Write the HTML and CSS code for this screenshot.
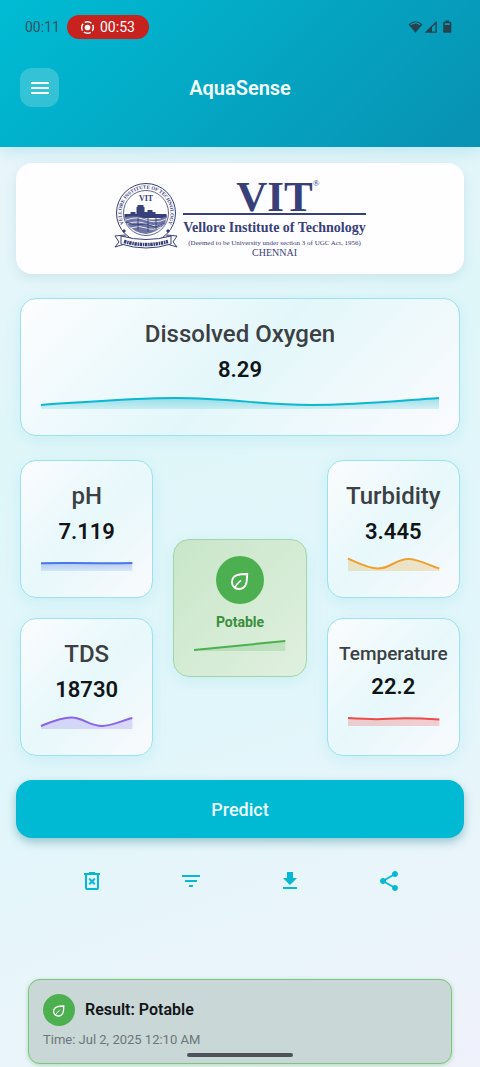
FILE: index.html
```html
<!DOCTYPE html>
<html lang="en">
<head>
<meta charset="utf-8">
<meta name="viewport" content="width=device-width, initial-scale=1">
<title>AquaSense</title>
<link rel="stylesheet" href="styles.css">
</head>
<body>
<svg class="defs" aria-hidden="true">
  <defs>
    <symbol id="leaf" viewBox="0 0 24 24"><path d="M19.200 6C12 6.100 4 6.300 4 14.200A6.700 6.700 0 0 0 10.800 21C18.800 21 19.100 13 19.200 6Z" fill="none" stroke="currentColor" stroke-width="1.900"/><path d="M6.500 20Q8.500 15.500 13 12.300" fill="none" stroke="currentColor" stroke-width="1.500"/></symbol>
    <linearGradient id="fade-cyan" x1="0" y1="0" x2="0" y2="1"><stop offset="0" stop-color="#00acc1" stop-opacity=".35"/><stop offset="1" stop-color="#00acc1" stop-opacity=".14"/></linearGradient>
    <linearGradient id="fade-blue" x1="0" y1="0" x2="0" y2="1"><stop offset="0" stop-color="#4a78e0" stop-opacity=".35"/><stop offset="1" stop-color="#4a78e0" stop-opacity=".14"/></linearGradient>
  </defs>
</svg>

<header class="header">
  <div class="status">
    <span class="clock">00:11</span>
    <span class="recording">
      <svg class="rec-icon" viewBox="0 0 16 16"><circle cx="8" cy="8" r="3" fill="#fff"/><circle cx="8" cy="8" r="6.2" fill="none" stroke="#fff" stroke-width="1.5" stroke-dasharray="7.7 2" stroke-dashoffset="3.8"/></svg>
      00:53
    </span>
    <svg class="system" viewBox="0 0 44 14">
      <path d="M.5 4.500Q7.500-2 14.500 4.500L7.500 12.800Z"/>
      <path d="M2.800 4.700Q7.500.9 12.200 4.700" fill="none" stroke="#079dbd" stroke-width="1.200"/>
      <path d="M16.500 12.800L28.800.8V12.800Z"/><path d="M24 7.200L27.400 4V11.500H24Z" fill="#079dbd"/>
      <path d="M37.500.5h3.500v1.200h1.500q.8 0 .8.800v9.500q0 .8-.8.800h-6.500q-.8 0-.8-.8V2.500q0-.8.8-.8h1.500z"/><path d="M36.700 3.200h5v1.800h-5z" fill="#079dbd"/>
    </svg>
  </div>
  <div class="toolbar">
    <button class="menu" aria-label="Menu"><svg class="icon" viewBox="0 0 24 24"><path d="M3 18h18v-2H3v2zm0-5h18v-2H3v2zm0-7v2h18V6H3z"/></svg></button>
    <h1 class="title">AquaSense</h1>
  </div>
</header>

<main class="page">
  <section class="brand">
    <svg class="seal" viewBox="0 0 64 70">
      <defs><path id="ring" d="M13.800 47.600A24.500 24.500 0 1 1 50.200 47.600"/></defs>
      <circle cx="32" cy="31" r="29.500" fill="none" stroke="#38407a"/>
      <circle cx="32" cy="31" r="22.500" fill="none" stroke="#38407a" stroke-width=".8"/>
      <text class="ring-text"><textPath href="#ring" startOffset="50%" text-anchor="middle">VELLORE INSTITUTE OF TECHNOLOGY</textPath></text>
      <text class="seal-text" x="32" y="19" text-anchor="middle">VIT</text>
      <path d="M10.500 32h6v-2h5v2h1v-7h1v-2h6v2h1v5h3v-2h5v2h3v2h11v4H10.500z" fill="#38407a"/>
      <path d="M11 35Q20 32 30 36T53 34L51 42Q42 51 32 52Q20 51 12 41Z" fill="#6f76a3"/>
      <path d="M12 38q10-4 20 0t20-1M13 42q10-4 20 0t18-1M17 46q8-3 15 0t15-1" fill="none" stroke="#fff" stroke-width=".8"/>
      <path d="M11 34h42M12 40l8 3 12-1 9 3 10-4M24 36v12M34 36v14M42 36v11" fill="none" stroke="#38407a" stroke-width=".9"/>
      <path d="M8 49l2-2 2 2-2 2zM52 49l2-2 2 2-2 2z" fill="#38407a"/>
      <path d="M1 54l10-1v9l-10 3 4-5zM63 54l-10-1v9l10 3-4-5z" fill="#fff" stroke="#38407a"/>
      <path d="M7 54q25 7 50 0v8q-25 8-50 0z" fill="#fff" stroke="#38407a"/>
      <path d="M10 59.500q22 6 44 0" fill="none" stroke="#38407a" stroke-width="3.500" stroke-dasharray="2.500 .7 1.500 .6"/>
    </svg>
    <div class="brand-text">
      <div class="brand-name">VIT<span class="registered">®</span></div>
      <div class="brand-full">Vellore Institute of Technology</div>
      <div class="brand-note">(Deemed to be University under section 3 of UGC Act, 1956)</div>
      <div class="brand-city">CHENNAI</div>
    </div>
  </section>

  <section class="readings">
    <article class="card">
      <h2 class="label">Dissolved Oxygen</h2>
      <p class="value">8.29</p>
      <svg class="chart" viewBox="0 0 398 24" preserveAspectRatio="none"><path d="M0 14C45 11 90 7 135 7C190 7 220 14 270 14C315 14 355 10 398 7V18H0Z" fill="url(#fade-cyan)"/><path class="line" d="M0 14C45 11 90 7 135 7C190 7 220 14 270 14C315 14 355 10 398 7" stroke="#0cb7d2"/></svg>
    </article>
    <div class="columns">
      <div class="column">
        <article class="card">
          <h2 class="label">pH</h2>
          <p class="value">7.119</p>
          <svg class="chart" viewBox="0 0 91 24" preserveAspectRatio="none"><path d="M0 10H91V18H0Z" fill="url(#fade-blue)"/><path class="line" d="M0 10.200Q15 9.800 30 10T60 10.300T91 10" stroke="#4a78e8"/></svg>
        </article>
        <article class="card">
          <h2 class="label">TDS</h2>
          <p class="value">18730</p>
          <svg class="chart" viewBox="0 0 91 24" preserveAspectRatio="none"><path d="M0 15C10 11 20 6.500 30 6.500C42 6.500 48 15 61 15C70 15 80 10 91 7V18H0Z" fill="#8b6cec" fill-opacity=".24"/><path class="line" d="M0 15C10 11 20 6.500 30 6.500C42 6.500 48 15 61 15C70 15 80 10 91 7" stroke="#8b63ec"/></svg>
        </article>
      </div>
      <article class="card card-potable">
        <span class="badge"><svg class="icon" viewBox="0 0 24 24"><use href="#leaf"/></svg></span>
        <p class="verdict">Potable</p>
        <svg class="chart" viewBox="0 0 91 24" preserveAspectRatio="none"><path d="M0 14L91 5V15H0Z" fill="#4caf50" fill-opacity=".2"/><path class="line" d="M0 14L91 5" stroke="#4caf50"/></svg>
      </article>
      <div class="column">
        <article class="card">
          <h2 class="label">Turbidity</h2>
          <p class="value">3.445</p>
          <svg class="chart" viewBox="0 0 91 24" preserveAspectRatio="none"><path d="M0 5.500C10 10 20 15.500 30 15.500C42 15.500 48 6 60 6C70 6 80 12 91 15.500V18H0Z" fill="#e8ab35" fill-opacity=".27"/><path class="line" d="M0 5.500C10 10 20 15.500 30 15.500C42 15.500 48 6 60 6C70 6 80 12 91 15.500" stroke="#f0a030"/></svg>
        </article>
        <article class="card">
          <h2 class="label label-small">Temperature</h2>
          <p class="value">22.2</p>
          <svg class="chart" viewBox="0 0 91 24" preserveAspectRatio="none"><path d="M0 10Q30 12 60 10L91 11V18H0Z" fill="#ef5350" fill-opacity=".26"/><path class="line" d="M0 10C15 11 30 11.500 40 10.800C55 9.800 65 9.800 91 11.500" stroke="#ee4b4b"/></svg>
        </article>
      </div>
    </div>
  </section>

  <button class="predict">Predict</button>

  <nav class="actions" aria-label="History actions">
    <button class="action" aria-label="Delete all"><svg class="icon" viewBox="0 0 24 24"><path d="M9 3h6v1h5v2h-1v13q0 2-2 2H7q-2 0-2-2V6H4V4h5zM7 6v13h10V6zM8.500 10.400L9.900 9 12 11.100 14.100 9l1.400 1.400-2.100 2.100 2.100 2.100-1.400 1.400-2.100-2.100L9.900 16l-1.400-1.400 2.100-2.100z" fill-rule="evenodd"/></svg></button>
    <button class="action" aria-label="Filter"><svg class="icon" viewBox="0 0 24 24"><path d="M10 18h4v-2h-4v2zM3 6v2h18V6H3zm3 7h12v-2H6v2z"/></svg></button>
    <button class="action" aria-label="Download"><svg class="icon" viewBox="0 0 24 24"><path d="M5 20h14v-2H5v2zM19 9h-4V3H9v6H5l7 7 7-7z"/></svg></button>
    <button class="action" aria-label="Share"><svg class="icon" viewBox="0 0 24 24"><path d="M18 16.080c-.76 0-1.440.3-1.960.77L8.910 12.700c.05-.23.090-.46.090-.7s-.04-.47-.09-.7l7.050-4.110c.54.5 1.250.81 2.040.81 1.660 0 3-1.340 3-3s-1.340-3-3-3-3 1.340-3 3c0 .24.040.47.090.7L8.040 9.810C7.500 9.310 6.790 9 6 9c-1.660 0-3 1.340-3 3s1.340 3 3 3c.79 0 1.500-.31 2.040-.81l7.120 4.160c-.05.21-.08.43-.08.650 0 1.610 1.310 2.920 2.920 2.920s2.920-1.310 2.920-2.920-1.310-2.920-2.920-2.920z"/></svg></button>
  </nav>

  <article class="result">
    <div class="result-head">
      <span class="badge badge-small"><svg class="icon icon-small" viewBox="0 0 24 24"><use href="#leaf"/></svg></span>
      <h2 class="result-title">Result: Potable</h2>
    </div>
    <p class="result-time">Time: Jul 2, 2025 12:10 AM</p>
  </article>
</main>
<div class="home-bar"></div>
</body>
</html>
```

FILE: styles.css
```css
* { box-sizing: border-box; margin: 0; }

body {
  min-height: 100vh;
  font-family: Roboto, "Liberation Sans", sans-serif;
  color: #121517;
  background: linear-gradient(160deg, #eef5fb 0%, #dff6f9 35%, #e1f6fa 65%, #e9f5fb 82%, #eff1fb 100%);
}

button { border: 0; padding: 0; font-family: inherit; cursor: pointer; }
.defs { position: absolute; width: 0; height: 0; }
.icon { display: block; width: 24px; height: 24px; fill: currentColor; }
.icon-small { width: 16px; height: 16px; }

.header {
  display: flex;
  flex-direction: column;
  gap: 28px;
  padding: 14px 20px 40px;
  background: linear-gradient(135deg, #00bcd4, #0891b2);
  box-shadow: 0 4px 16px rgba(0, 172, 193, .2);
}
.status { display: flex; align-items: center; height: 26px; padding: 0 8px 0 5px; }
.clock { width: 42px; font-size: 14px; color: #34525f; }
.recording {
  display: flex;
  align-items: center;
  gap: 5px;
  height: 24px;
  padding: 0 14px 0 13px;
  border-radius: 12px;
  background: #c8221f;
  color: #fff;
  font-size: 14px;
}
.rec-icon { width: 15px; height: 15px; }
.system { width: 44px; height: 14px; margin-left: auto; fill: #26424f; }

.toolbar { display: grid; grid-template-columns: 39px 1fr 39px; align-items: center; }
.menu {
  display: grid;
  place-items: center;
  height: 39px;
  border-radius: 12px;
  background: rgba(255, 255, 255, .2);
  color: #fff;
}
.title { text-align: center; font-size: 20px; line-height: 24px; font-weight: 600; color: #f4fdff; }

.page { display: flex; flex-direction: column; padding: 16px 16px 3px; }

.brand {
  display: flex;
  justify-content: center;
  gap: 5px;
  padding: 16px 0;
  border-radius: 16px;
  background: #fefdff;
  box-shadow: 0 4px 12px rgba(0, 100, 120, .1);
  color: #38407a;
  font-family: "Liberation Serif", serif;
}
.seal { width: 64px; height: 70px; margin-top: 3px; }
.ring-text { font-size: 5px; font-weight: 700; fill: #38407a; }
.seal-text { font-size: 8px; font-weight: 700; fill: #38407a; }
.brand-text { display: flex; flex-direction: column; align-items: center; }
.brand-name {
  display: flex;
  justify-content: center;
  align-self: stretch;
  height: 36px;
  border-bottom: 2px solid #38407a;
  font-size: 43px;
  line-height: 36px;
  font-weight: 700;
}
.registered { width: 0; font-size: 9px; line-height: 8px; font-weight: 400; }
.brand-full { margin-top: 3px; font-size: 14px; line-height: 20px; font-weight: 700; }
.brand-note { font-size: 7px; line-height: 10px; }
.brand-city { font-size: 10px; line-height: 10px; }

.readings { display: flex; flex-direction: column; gap: 24px; padding: 24px 4px; }
.columns { display: grid; grid-template-columns: repeat(3, 1fr); align-items: center; gap: 20px; }
.column { display: flex; flex-direction: column; gap: 20px; min-width: 0; }
.card {
  display: flex;
  flex-direction: column;
  align-items: center;
  justify-content: center;
  gap: 8px;
  min-height: 138px;
  padding: 16px 20px;
  border: 1px solid #9ae2ed;
  border-radius: 16px;
  background: linear-gradient(135deg, #fdfdff, #e3f7fa 50%, #fbfbfe);
  box-shadow: 0 4px 16px rgba(0, 188, 212, .1);
}
.column .card { background: linear-gradient(135deg, #fbfcfe, #e7f8fb 50%, #f9fafd); }
.label { font-size: 24px; line-height: 30px; font-weight: 500; color: #3c4043; white-space: nowrap; }
.label-small { font-size: 19px; line-height: 24px; }
.value { font-size: 22px; line-height: 26px; font-weight: 600; }
.chart { display: block; width: 100%; height: 24px; overflow: visible; }
.line { fill: none; stroke-width: 2; }

.columns .card-potable {
  gap: 4px;
  border-color: #a3d6a6;
  background: linear-gradient(135deg, #c8e6c9, #e0f0df);
}
.badge {
  display: grid;
  place-items: center;
  width: 48px;
  height: 48px;
  border-radius: 50%;
  background: #4caf50;
  color: #fff;
}
.badge-small { width: 32px; height: 32px; }
.verdict { padding-top: 4px; font-size: 14px; line-height: 20px; font-weight: 700; color: #388e3c; }

.predict {
  height: 58px;
  border-radius: 16px;
  background: #00bad4;
  box-shadow: 0 4px 10px rgba(0, 105, 125, .35);
  color: #effcff;
  font-size: 18px;
  font-weight: 500;
}

.actions { display: grid; grid-template-columns: repeat(4, 1fr); margin: 19px 26px 74px; }
.action { display: grid; place-items: center; height: 48px; background: none; color: #06b9d2; }

.result {
  display: flex;
  flex-direction: column;
  gap: 4px;
  margin: 0 12px;
  padding: 14px 14px 13px;
  border: 1px solid #7bc67e;
  border-radius: 12px;
  background: #c9d7d7;
  box-shadow: 0 1px 4px rgba(76, 175, 80, .4);
}
.result-head { display: flex; align-items: center; gap: 10px; }
.result-title { font-size: 16px; line-height: 20px; font-weight: 600; }
.result-time { font-size: 13px; line-height: 20px; color: #6c7678; }

.home-bar {
  position: fixed;
  bottom: 10px;
  left: 50%;
  width: 106px;
  height: 4px;
  margin-left: -53px;
  border-radius: 2px;
  background: #4d5358;
}
```
